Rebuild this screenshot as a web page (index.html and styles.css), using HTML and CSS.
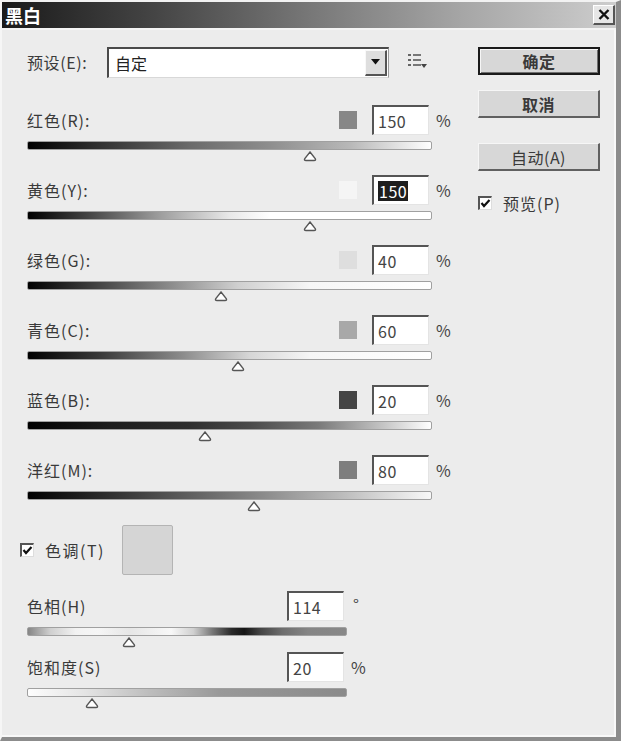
FILE: index.html
```html
<!DOCTYPE html>
<html lang="zh">
<head>
<meta charset="utf-8">
<title>黑白</title>
<link rel="stylesheet" href="styles.css">
</head>
<body>
<div class="dialog">
  <div class="titlebar">
    <span class="title">黑白</span>
    <span class="close">
      <svg width="12" height="11" viewBox="0 0 12 11"><path d="M1.5 1 L10.5 10 M10.5 1 L1.5 10" stroke="#111" stroke-width="2.4" fill="none"/></svg>
    </span>
  </div>
  <div class="content">
    <div class="left">
      <div class="preset-row">
        <span class="preset-label">预设(E):</span>
        <div class="select">
          <span class="select-text">自定</span>
          <span class="select-btn"><svg width="9" height="6" viewBox="0 0 9 6"><path d="M0 0 H9 L4.5 5.5 Z" fill="#111"/></svg></span>
        </div>
        <svg class="menu-icon" width="20" height="16" viewBox="0 0 20 16">
          <rect x="0" y="0" width="3" height="2" fill="#666"/>
          <rect x="5" y="0" width="8" height="2" fill="#777"/>
          <rect x="0" y="5" width="3" height="2" fill="#666"/>
          <rect x="5" y="5" width="8" height="2" fill="#777"/>
          <rect x="0" y="10" width="3" height="2" fill="#666"/>
          <rect x="5" y="10" width="8" height="2" fill="#777"/>
          <path d="M13 10 H19 L16 14 Z" fill="#444"/>
        </svg>
      </div>

      <div class="channels">
        <div class="channel">
          <div class="ch-head">
            <span class="ch-label">红色(R):</span>
            <span class="swatch" style="background:#878787"></span>
            <span class="field">150</span>
            <span class="unit">%</span>
          </div>
          <div class="bar bar-red"><svg class="thumb" style="left:70%" width="14" height="11" viewBox="0 0 14 11"><path d="M7 1 L12.2 7.6 Q13.2 9.5 11 9.5 L3 9.5 Q0.8 9.5 1.8 7.6 Z" fill="#fff" stroke="#555" stroke-width="1.4"/></svg></div>
        </div>
        <div class="channel">
          <div class="ch-head">
            <span class="ch-label">黄色(Y):</span>
            <span class="swatch" style="background:#f5f5f5"></span>
            <span class="field"><span class="selected">150</span></span>
            <span class="unit">%</span>
          </div>
          <div class="bar bar-yellow"><svg class="thumb" style="left:70%" width="14" height="11" viewBox="0 0 14 11"><path d="M7 1 L12.2 7.6 Q13.2 9.5 11 9.5 L3 9.5 Q0.8 9.5 1.8 7.6 Z" fill="#fff" stroke="#555" stroke-width="1.4"/></svg></div>
        </div>
        <div class="channel">
          <div class="ch-head">
            <span class="ch-label">绿色(G):</span>
            <span class="swatch" style="background:#dedede"></span>
            <span class="field">40</span>
            <span class="unit">%</span>
          </div>
          <div class="bar bar-green"><svg class="thumb" style="left:48%" width="14" height="11" viewBox="0 0 14 11"><path d="M7 1 L12.2 7.6 Q13.2 9.5 11 9.5 L3 9.5 Q0.8 9.5 1.8 7.6 Z" fill="#fff" stroke="#555" stroke-width="1.4"/></svg></div>
        </div>
        <div class="channel">
          <div class="ch-head">
            <span class="ch-label">青色(C):</span>
            <span class="swatch" style="background:#a8a8a8"></span>
            <span class="field">60</span>
            <span class="unit">%</span>
          </div>
          <div class="bar bar-cyan"><svg class="thumb" style="left:52%" width="14" height="11" viewBox="0 0 14 11"><path d="M7 1 L12.2 7.6 Q13.2 9.5 11 9.5 L3 9.5 Q0.8 9.5 1.8 7.6 Z" fill="#fff" stroke="#555" stroke-width="1.4"/></svg></div>
        </div>
        <div class="channel">
          <div class="ch-head">
            <span class="ch-label">蓝色(B):</span>
            <span class="swatch" style="background:#444444"></span>
            <span class="field">20</span>
            <span class="unit">%</span>
          </div>
          <div class="bar bar-blue"><svg class="thumb" style="left:44%" width="14" height="11" viewBox="0 0 14 11"><path d="M7 1 L12.2 7.6 Q13.2 9.5 11 9.5 L3 9.5 Q0.8 9.5 1.8 7.6 Z" fill="#fff" stroke="#555" stroke-width="1.4"/></svg></div>
        </div>
        <div class="channel">
          <div class="ch-head">
            <span class="ch-label">洋红(M):</span>
            <span class="swatch" style="background:#7e7e7e"></span>
            <span class="field">80</span>
            <span class="unit">%</span>
          </div>
          <div class="bar bar-magenta"><svg class="thumb" style="left:56%" width="14" height="11" viewBox="0 0 14 11"><path d="M7 1 L12.2 7.6 Q13.2 9.5 11 9.5 L3 9.5 Q0.8 9.5 1.8 7.6 Z" fill="#fff" stroke="#555" stroke-width="1.4"/></svg></div>
        </div>
      </div>

      <div class="tone-row">
        <span class="checkbox"><svg width="13" height="13" viewBox="0 0 13 13"><path d="M2.5 6 L5 9 L10.5 3" stroke="#111" stroke-width="2.2" fill="none"/></svg></span>
        <span class="tone-label">色调(T)</span>
        <span class="tone-swatch"></span>
      </div>

      <div class="hs">
        <div class="hs-head">
          <span class="ch-label">色相(H)</span>
          <span class="field">114</span>
          <span class="unit deg">°</span>
        </div>
        <div class="bar bar-hue"><svg class="thumb" style="left:31.7%" width="14" height="11" viewBox="0 0 14 11"><path d="M7 1 L12.2 7.6 Q13.2 9.5 11 9.5 L3 9.5 Q0.8 9.5 1.8 7.6 Z" fill="#fff" stroke="#555" stroke-width="1.4"/></svg></div>
      </div>
      <div class="hs hs-sat">
        <div class="hs-head">
          <span class="ch-label">饱和度(S)</span>
          <span class="field">20</span>
          <span class="unit">%</span>
        </div>
        <div class="bar bar-sat"><svg class="thumb" style="left:20%" width="14" height="11" viewBox="0 0 14 11"><path d="M7 1 L12.2 7.6 Q13.2 9.5 11 9.5 L3 9.5 Q0.8 9.5 1.8 7.6 Z" fill="#fff" stroke="#555" stroke-width="1.4"/></svg></div>
      </div>
    </div>

    <div class="right">
      <button class="btn btn-default">确定</button>
      <button class="btn btn-cancel">取消</button>
      <button class="btn btn-auto">自动(A)</button>
      <div class="preview-row">
        <span class="checkbox"><svg width="13" height="13" viewBox="0 0 13 13"><path d="M2.5 6 L5 9 L10.5 3" stroke="#111" stroke-width="2.2" fill="none"/></svg></span>
        <span class="preview-label">预览(P)</span>
      </div>
    </div>
  </div>
</div>
</body>
</html>
```

FILE: styles.css
```css
html, body {
  margin: 0;
  padding: 0;
  background: #ebebeb;
}

.dialog {
  width: 621px;
  height: 741px;
  box-sizing: border-box;
  background: #ececec;
  border-top: 2px solid #f2f2f2;
  border-left: 2px solid #f6f6f6;
  border-right: 5px solid #8c8c8c;
  border-bottom: 4px solid #8c8c8c;
  box-shadow: inset -2px -2px 0 #f8f8f8;
  font-family: "Noto Sans CJK SC", "Liberation Sans", sans-serif;
  font-size: 16px;
  color: #3a3a3a;
  overflow: hidden;
}

.titlebar {
  height: 26px;
  background: linear-gradient(to right, #1a1a1a 0%, #454545 25%, #777 50%, #a6a6a6 75%, #cdcdcd 100%);
  display: flex;
  align-items: center;
  justify-content: space-between;
  padding: 0 1px 0 3px;
  border-bottom: 2px solid #f4f4f4;
}

.title {
  color: #fff;
  font-weight: bold;
  font-size: 18px;
  line-height: 20px;
}

.close {
  width: 22px;
  height: 20px;
  box-sizing: border-box;
  background: #e6e6e6;
  border-top: 1px solid #fff;
  border-left: 1px solid #fff;
  border-right: 2px solid #555;
  border-bottom: 2px solid #555;
  display: flex;
  align-items: center;
  justify-content: center;
}

.content {
  display: flex;
  padding-top: 17px;
}

.left {
  width: 430px;
  margin-left: 25px;
}

.preset-row {
  display: flex;
  align-items: center;
  height: 30px;
}

.preset-label {
  width: 80px;
  line-height: 20px;
  letter-spacing: 0.6px;
}

.select {
  width: 282px;
  height: 31px;
  box-sizing: border-box;
  background: #fff;
  border-top: 2px solid #4a4a4a;
  border-left: 2px solid #4a4a4a;
  border-right: 1px solid #9a9a9a;
  border-bottom: 1px solid #d8d8d8;
  display: flex;
  align-items: center;
  justify-content: space-between;
}

.select-text {
  padding-left: 6px;
  line-height: 20px;
  color: #222;
}

.select-btn {
  width: 22px;
  height: 26px;
  box-sizing: border-box;
  margin-right: 1px;
  background: #dedede;
  border-top: 1px solid #f8f8f8;
  border-left: 1px solid #f8f8f8;
  border-right: 2px solid #555;
  border-bottom: 2px solid #555;
  display: flex;
  align-items: center;
  justify-content: center;
}

.menu-icon {
  margin-left: 19px;
}

.channels {
  margin-top: 28px;
}

.channel {
  width: 426px;
  margin-bottom: 25px;
}

.ch-head, .hs-head {
  display: flex;
  align-items: center;
  height: 30px;
}

.ch-label {
  flex: 1;
  line-height: 20px;
  letter-spacing: 1px;
}

.swatch {
  width: 18px;
  height: 18px;
  margin-right: 15px;
}

.field {
  width: 57px;
  height: 30px;
  box-sizing: border-box;
  background: #fff;
  border-top: 2px solid #555;
  border-left: 2px solid #555;
  border-right: 1px solid #e4e4e4;
  border-bottom: 1px solid #e4e4e4;
  padding-left: 4px;
  display: flex;
  align-items: center;
  line-height: 20px;
  color: #444;
  letter-spacing: 0.5px;
}

.selected {
  background: #1e1e1e;
  color: #fff;
  line-height: 20px;
  padding: 0 1px;
}

.unit {
  width: 17px;
  margin-left: 7px;
  line-height: 20px;
  color: #444;
}

.deg {
  align-self: flex-start;
  line-height: 16px;
  margin-top: 5px;
  margin-left: 9px;
  width: 15px;
}

.bar {
  position: relative;
  width: 405px;
  height: 9px;
  box-sizing: border-box;
  margin-top: 6px;
  border: 1px solid #a0a0a0;
  border-radius: 2px;
}

.thumb {
  position: absolute;
  top: 9px;
  margin-left: -7px;
}

.bar-red { background: linear-gradient(to right, #000 0%, #2a2a2a 15%, #6a6a6a 40%, #8e8e8e 60%, #b8b8b8 80%, #fff 100%); }
.bar-yellow { background: linear-gradient(to right, #000 0%, #444 15%, #9a9a9a 32%, #e8e8e8 50%, #fff 60%, #fff 100%); }
.bar-green { background: linear-gradient(to right, #000 0%, #3a3a3a 15%, #8a8a8a 35%, #cfcfcf 52%, #f6f6f6 70%, #fff 100%); }
.bar-cyan { background: linear-gradient(to right, #000 0%, #3a3a3a 18%, #8a8a8a 38%, #d6d6d6 55%, #f6f6f6 70%, #fff 100%); }
.bar-blue { background: linear-gradient(to right, #000 0%, #1c1c1c 20%, #2e2e2e 40%, #4a4a4a 55%, #7a7a7a 72%, #c4c4c4 88%, #fff 100%); }
.bar-magenta { background: linear-gradient(to right, #000 0%, #2a2a2a 18%, #5a5a5a 38%, #8a8a8a 58%, #bcbcbc 78%, #f8f8f8 100%); }

.tone-row {
  display: flex;
  align-items: center;
  height: 50px;
  margin-top: 6px;
  margin-left: -7px;
}

.checkbox {
  width: 14px;
  height: 14px;
  box-sizing: border-box;
  background: #fff;
  border-top: 2px solid #555;
  border-left: 2px solid #555;
  border-right: 1px solid #ddd;
  border-bottom: 1px solid #ddd;
  display: flex;
  align-items: center;
  justify-content: center;
  overflow: visible;
}

.checkbox svg {
  flex: none;
}

.tone-label {
  width: 63px;
  margin-left: 11px;
  line-height: 20px;
  letter-spacing: 1.5px;
}

.tone-swatch {
  width: 51px;
  height: 50px;
  box-sizing: border-box;
  margin-left: 14px;
  background: #d5d5d5;
  border: 1px solid #b4b4b4;
  border-radius: 2px;
}

.hs {
  width: 341px;
  margin-top: 16px;
}

.hs-sat {
  margin-top: 16px;
}

.hs .bar {
  width: 320px;
}

.bar-hue {
  background: linear-gradient(to right, #858585 0%, #cfcfcf 7%, #f2f2f2 15%, #f6f6f6 22%, #e6e6e6 32%, #f8f8f8 45%, #d0d0d0 52%, #777 58%, #2a2a2a 64%, #151515 68%, #444 73%, #6e6e6e 80%, #858585 88%, #888 100%);
}

.bar-sat {
  background: linear-gradient(to right, #fdfdfd 0%, #e4e4e4 18%, #bdbdbd 38%, #999 60%, #8a8a8a 100%);
}

.right {
  width: 122px;
  margin-left: 21px;
  display: flex;
  flex-direction: column;
}

.btn {
  width: 122px;
  height: 28px;
  box-sizing: border-box;
  margin: 0;
  padding: 0;
  background: #d7d7d7;
  border-top: 1px solid #f6f6f6;
  border-left: 1px solid #f6f6f6;
  border-right: 2px solid #606060;
  border-bottom: 2px solid #606060;
  font-family: "Noto Sans CJK SC", "Liberation Sans", sans-serif;
  font-size: 16px;
  font-weight: bold;
  line-height: 20px;
  color: #3a3a3a;
  letter-spacing: 0.5px;
}

.btn-default {
  border: 2px solid #1a1a1a;
  box-shadow: inset 1px 1px 0 #f6f6f6, inset -1px -1px 0 #707070;
}

.btn-cancel {
  margin-top: 15px;
}

.btn-auto {
  margin-top: 25px;
  font-weight: normal;
}

.preview-row {
  display: flex;
  align-items: center;
  margin-top: 25px;
  height: 14px;
}

.preview-label {
  margin-left: 11px;
  line-height: 20px;
  color: #3a3a3a;
  letter-spacing: 1px;
}
```
